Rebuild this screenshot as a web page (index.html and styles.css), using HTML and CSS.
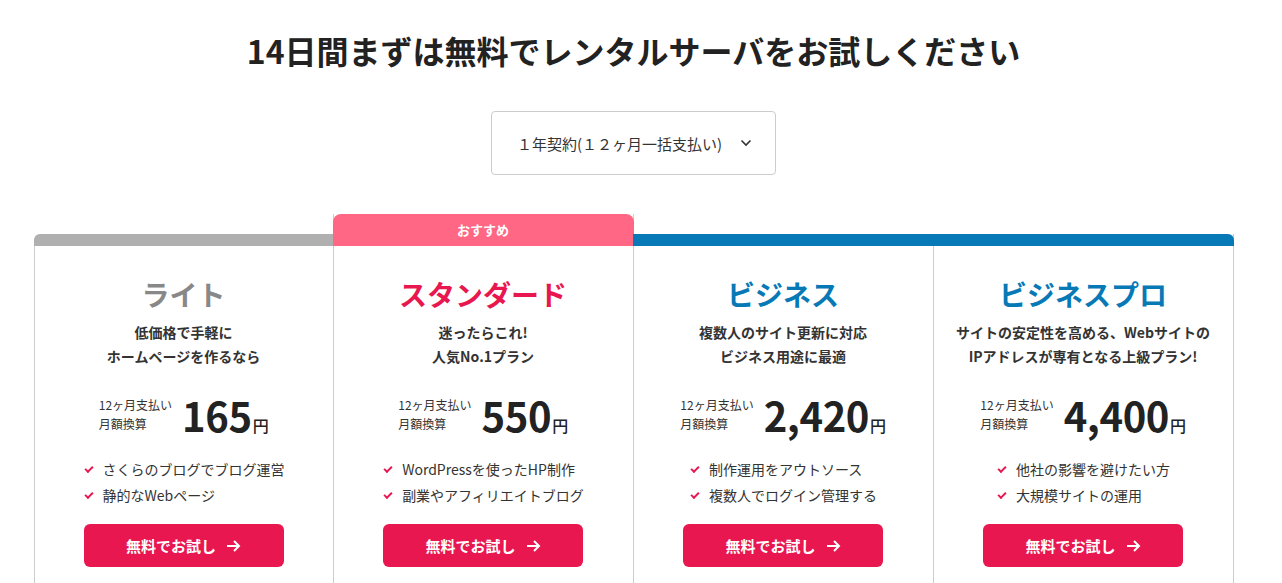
FILE: index.html
```html
<!DOCTYPE html>
<html lang="ja">
<head>
    <meta charset="UTF-8">
    <meta name="viewport" content="width=device-width, initial-scale=1.0">
    <title>14日間無料お試し</title>
    <link rel="stylesheet" href="styles.css">
</head>
<body>
    <div class="page">
        <h1 class="title">14日間まずは無料でレンタルサーバをお試しください</h1>

        <div class="term">
            <button class="term-select">
                <span>１年契約(１２ヶ月一括支払い)</span>
                <svg class="chevron" width="12" height="8" viewBox="0 0 12 8"><polyline points="1.5,1.5 6,6 10.5,1.5" fill="none" stroke="#333" stroke-width="1.6"/></svg>
            </button>
        </div>

        <div class="plans">
            <div class="plan plan-light">
                <div class="plan-top"></div>
                <div class="plan-body">
                    <h2 class="plan-name">ライト</h2>
                    <p class="plan-desc">低価格で手軽に<br>ホームページを作るなら</p>
                    <div class="price">
                        <div class="price-label">12ヶ月支払い<br>月額換算</div>
                        <div class="price-num">165<span class="yen">円</span></div>
                    </div>
                    <ul class="features">
                        <li>さくらのブログでブログ運営</li>
                        <li>静的なWebページ</li>
                    </ul>
                    <a class="try-btn" href="#">無料でお試し<svg class="arrow" width="15" height="12" viewBox="0 0 15 12"><path d="M1 6h12M8 1l5 5-5 5" fill="none" stroke="#fff" stroke-width="2"/></svg></a>
                </div>
            </div>

            <div class="plan plan-standard">
                <div class="plan-top featured">おすすめ</div>
                <div class="plan-body">
                    <h2 class="plan-name">スタンダード</h2>
                    <p class="plan-desc">迷ったらこれ!<br>人気No.1プラン</p>
                    <div class="price">
                        <div class="price-label">12ヶ月支払い<br>月額換算</div>
                        <div class="price-num">550<span class="yen">円</span></div>
                    </div>
                    <ul class="features">
                        <li>WordPressを使ったHP制作</li>
                        <li>副業やアフィリエイトブログ</li>
                    </ul>
                    <a class="try-btn" href="#">無料でお試し<svg class="arrow" width="15" height="12" viewBox="0 0 15 12"><path d="M1 6h12M8 1l5 5-5 5" fill="none" stroke="#fff" stroke-width="2"/></svg></a>
                </div>
            </div>

            <div class="plan plan-business">
                <div class="plan-top"></div>
                <div class="plan-body">
                    <h2 class="plan-name">ビジネス</h2>
                    <p class="plan-desc">複数人のサイト更新に対応<br>ビジネス用途に最適</p>
                    <div class="price">
                        <div class="price-label">12ヶ月支払い<br>月額換算</div>
                        <div class="price-num">2,420<span class="yen">円</span></div>
                    </div>
                    <ul class="features">
                        <li>制作運用をアウトソース</li>
                        <li>複数人でログイン管理する</li>
                    </ul>
                    <a class="try-btn" href="#">無料でお試し<svg class="arrow" width="15" height="12" viewBox="0 0 15 12"><path d="M1 6h12M8 1l5 5-5 5" fill="none" stroke="#fff" stroke-width="2"/></svg></a>
                </div>
            </div>

            <div class="plan plan-business plan-last">
                <div class="plan-top"></div>
                <div class="plan-body">
                    <h2 class="plan-name">ビジネスプロ</h2>
                    <p class="plan-desc">サイトの安定性を高める、Webサイトの<br>IPアドレスが専有となる上級プラン!</p>
                    <div class="price">
                        <div class="price-label">12ヶ月支払い<br>月額換算</div>
                        <div class="price-num">4,400<span class="yen">円</span></div>
                    </div>
                    <ul class="features">
                        <li>他社の影響を避けたい方</li>
                        <li>大規模サイトの運用</li>
                    </ul>
                    <a class="try-btn" href="#">無料でお試し<svg class="arrow" width="15" height="12" viewBox="0 0 15 12"><path d="M1 6h12M8 1l5 5-5 5" fill="none" stroke="#fff" stroke-width="2"/></svg></a>
                </div>
            </div>
        </div>
    </div>
</body>
</html>
```

FILE: styles.css
```css
body {
    margin: 0;
    font-family: "Noto Sans CJK JP", "Noto Sans", sans-serif;
    color: #333;
    background-color: #fff;
}
.page {
    width: 1267px;
    overflow: hidden;
}
.title {
    margin: 26px 0 0;
    font-size: 32px;
    line-height: 48px;
    font-weight: 700;
    text-align: center;
    color: #222;
}
.term {
    display: flex;
    justify-content: center;
    margin-top: 37px;
}
.term-select {
    display: flex;
    align-items: center;
    gap: 18px;
    width: 285px;
    height: 64px;
    padding: 0 0 0 25px;
    border: 1px solid #ccc;
    border-radius: 4px;
    background-color: #fff;
    font-family: inherit;
    font-size: 15px;
    color: #333;
    cursor: pointer;
}
.chevron {
    display: block;
}
.plans {
    display: grid;
    grid-template-columns: repeat(4, 300px);
    align-items: end;
    width: 1200px;
    margin: 39px auto 0;
}
.plan {
    border-right: 1px solid #ccc;
}
.plan-light {
    border-left: 1px solid #ccc;
    border-top-left-radius: 8px;
}
.plan-standard {
    margin-left: -1px;
    border-left: 1px solid #ccc;
}
.plan-top {
    height: 12px;
    margin: 0 -1px;
}
.plan-light .plan-top {
    background-color: #b0b0b0;
    border-top-left-radius: 6px;
    margin-right: 0;
}
.plan-business .plan-top {
    background-color: #0779b6;
}
.plan-last .plan-top {
    border-top-right-radius: 6px;
}
.plan-top.featured {
    height: 32px;
    background-color: #ff6784;
    border-radius: 8px 8px 0 0;
    color: #fff;
    font-size: 13px;
    font-weight: 700;
    line-height: 32px;
    text-align: center;
}
.plan-body {
    padding: 28px 0 40px;
    text-align: center;
}
.plan-name {
    margin: 0;
    font-size: 28px;
    line-height: 40px;
    font-weight: 700;
}
.plan-light .plan-name {
    color: #888;
}
.plan-standard .plan-name {
    color: #e8174f;
}
.plan-business .plan-name {
    color: #0779b6;
}
.plan-desc {
    margin: 6px 0 0;
    font-size: 14px;
    line-height: 24px;
    font-weight: 700;
    color: #333;
}
.price {
    display: flex;
    justify-content: center;
    align-items: center;
    gap: 10px;
    margin-top: 23px;
}
.price-label {
    padding-bottom: 10px;
    font-size: 12px;
    line-height: 19px;
    text-align: left;
    color: #333;
}
.price-num {
    padding-top: 2px;
    font-size: 40px;
    line-height: 44px;
    font-weight: 700;
    color: #222;
    letter-spacing: -0.01em;
}
.yen {
    margin-left: 1px;
    font-size: 16px;
    font-weight: 500;
}
.features {
    display: inline-block;
    margin: 9px 0 0;
    padding: 0;
    list-style: none;
    text-align: left;
    font-size: 14px;
    line-height: 26px;
    color: #333;
}
.features li {
    display: flex;
    align-items: center;
}
.features li::before {
    content: "";
    width: 6px;
    height: 3px;
    margin: -2px 10px 0 2px;
    border-left: 2px solid #e8174f;
    border-bottom: 2px solid #e8174f;
    transform: rotate(-45deg);
}
.try-btn {
    display: flex;
    align-items: center;
    justify-content: center;
    gap: 10px;
    width: 200px;
    height: 43px;
    margin: 16px auto 0;
    border-radius: 6px;
    background-color: #e8174f;
    color: #fff;
    font-size: 15px;
    font-weight: 700;
    text-decoration: none;
}
.arrow {
    display: block;
}
```
